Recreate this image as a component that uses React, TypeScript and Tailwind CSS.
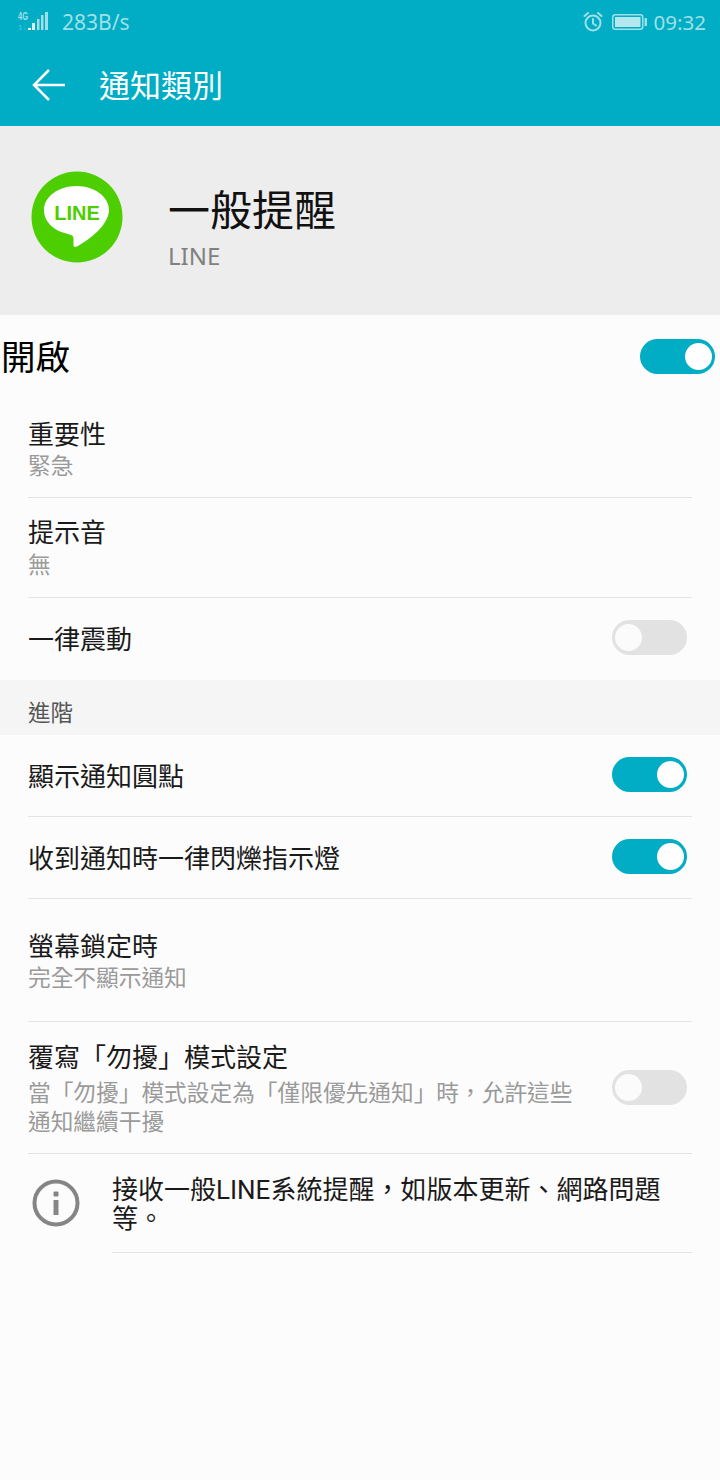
const cjk = "font-['Roboto','Noto_Sans_CJK_TC',sans-serif]";

const Toggle = ({ on }: { on?: boolean }) => (
  <div
    className={`flex items-center h-[35px] w-[75px] shrink-0 rounded-full px-[3px] ${
      on ? 'bg-[#00adc4] justify-end' : 'bg-[#e2e2e2] justify-start'
    }`}
  >
    <div className={`h-[27px] w-[27px] rounded-full ${on ? 'bg-white' : 'bg-[#fbfbfb]'}`} />
  </div>
);

const Row = ({
  title,
  sub,
  on,
  className,
  titleClass = '',
  subClass = 'mt-[1px]',
  border = true,
}: {
  title: string;
  sub?: string;
  on?: boolean;
  className: string;
  titleClass?: string;
  subClass?: string;
  border?: boolean;
}) => (
  <div className={`mx-[28px] flex items-center justify-between ${border ? 'border-b border-[#e3e3e3]' : ''} ${className}`}>
    <div className={`min-w-0 ${titleClass}`}>
      <div className="text-[26px] leading-[34px] text-[#1a1a1a]">{title}</div>
      {sub && <div className={`w-[550px] text-[22.7px] leading-[29px] text-[#9a9a9a] ${subClass}`}>{sub}</div>}
    </div>
    {on !== undefined && (
      <div className="mr-[5px]">
        <Toggle on={on} />
      </div>
    )}
  </div>
);

const LineLogo = () => (
  <svg width="92" height="92" viewBox="0 0 92 92">
    <circle cx="46" cy="46" r="45.5" fill="#4cce00" />
    <path
      d="M45.500 15C27 15 13 26 13 39c0 12 10 21 24 24 4 1 5.500 2 5.500 5v6c0 2 1.500 2.500 3.500 1.500C60 68 78 53 78 39 78 26 64 15 45.500 15Z"
      fill="#fff"
    />
    <text
      x="46"
      y="49"
      textAnchor="middle"
      fontFamily="'Liberation Sans',sans-serif"
      fontWeight="700"
      fontSize="20"
      fill="#4cce00"
    >
      LINE
    </text>
  </svg>
);

const StatusBar = () => (
  <div className="flex h-[44px] items-center justify-between pl-[17px] pr-[14px] text-[#9fe0e8]">
    <div className="flex items-center">
      <svg width="32" height="22" viewBox="0 0 32 22" fill="#9fe0e8">
        <text x="1" y="9" fontSize="10" fontWeight="700" textLength={10} lengthAdjust="spacingAndGlyphs" fontFamily="'Liberation Sans',sans-serif">4G</text>
        <text x="1" y="19" fontSize="8" opacity="0.5" fontFamily="'Liberation Sans',sans-serif">1↓</text>
        <rect x="11" y="17" width="3" height="2" fill="#fff" />
        <rect x="15" y="12" width="3" height="7" fill="#d5f3f6" />
        <rect x="20" y="8" width="2.500" height="11" />
        <rect x="24" y="4" width="2.500" height="15" />
        <rect x="28" y="1" width="3" height="18" />
      </svg>
      <span className="ml-[13px] text-[21px] leading-none font-['Noto_Sans',sans-serif]">283B/s</span>
    </div>
    <div className="flex items-center">
      <svg width="20" height="20" viewBox="1 1 20 20" fill="none" stroke="#9fe0e8" strokeWidth="2" strokeLinecap="round">
        <circle cx="11" cy="12" r="7.500" />
        <path d="M11 8v4.500l3 2M2.500 5 6 2M19.500 5 16 2" />
      </svg>
      <svg className="ml-[9px]" width="35" height="16" viewBox="0 0 35 16">
        <rect x="0.750" y="0.750" width="30" height="14.500" rx="2.500" fill="none" stroke="#9fe0e8" strokeWidth="1.500" />
        <rect x="3" y="3" width="25.500" height="10" fill="#b5e8ee" />
        <rect x="32.500" y="4" width="2.500" height="8" rx="0.500" fill="#9fe0e8" />
      </svg>
      <span className="ml-[7px] text-[20.500px] leading-none font-['Noto_Sans',sans-serif]">09:32</span>
    </div>
  </div>
);

export default function App() {
  return (
    <div className={`flex h-[1480px] w-[720px] flex-col overflow-hidden bg-[#fcfcfc] ${cjk}`}>
      <div className="h-[126px] bg-[#00adc4]">
        <StatusBar />
        <div className="flex h-[82px] items-center pl-[32px]">
          <svg width="34" height="34" viewBox="0 0 34 34" fill="none" stroke="#fff" strokeWidth="2.500">
            <path d="M33 17H3M17 2 2 17l15 15" />
          </svg>
          <span className="ml-[33px] pt-[3px] text-[31px] leading-none text-white">通知類別</span>
        </div>
      </div>

      <div className="flex h-[189px] items-center bg-[#ededed] pl-[31px]">
        <div className="-mt-[7px]">
          <LineLogo />
        </div>
        <div className="ml-[45px] pt-[17px]">
          <div className="text-[42px] leading-[50px] text-[#111]">一般提醒</div>
          <div className="mt-[4px] text-[24px] leading-[30px] text-[#808080] font-['Noto_Sans',sans-serif]">LINE</div>
        </div>
      </div>

      <div className="flex h-[83px] items-center justify-between pl-[1px] pr-[5px]">
        <span className="pt-[4px] text-[34.500px] leading-none text-black">開啟</span>
        <Toggle on />
      </div>

      <Row title="重要性" sub="緊急" subClass="mt-0" className="h-[100px] pt-[4px]" />
      <Row title="提示音" sub="無" className="h-[100px]" />
      <Row title="一律震動" on={false} titleClass="pt-[5px]" className="h-[82px] pb-[3px]" border={false} />

      <div className="flex h-[55px] items-center bg-[#f5f5f5] pl-[28px] pt-[12px] text-[22.500px] text-[#555]">進階</div>

      <Row title="顯示通知圓點" on titleClass="pt-[4px]" className="h-[82px] pb-[2px]" />
      <Row title="收到通知時一律閃爍指示燈" on titleClass="pt-[5px]" className="h-[82px] pb-[2px]" />
      <Row title="螢幕鎖定時" sub="完全不顯示通知" subClass="mt-0" titleClass="pt-[3px]" className="h-[123px]" />
      <Row
        title="覆寫「勿擾」模式設定"
        sub="當「勿擾」模式設定為「僅限優先通知」時，允許這些通知繼續干擾"
        subClass="mt-[4px]"
        titleClass="pt-[3px]"
        on={false}
        className="h-[132px]"
      />

      <div className="flex">
        <div className="flex w-[112px] shrink-0 justify-center pt-[25px]">
          <svg width="48" height="48" viewBox="0 0 48 48" fill="none">
            <circle cx="24" cy="24" r="21.500" stroke="#858585" strokeWidth="4" />
            <rect x="21.500" y="21" width="5" height="15" fill="#858585" />
            <rect x="21.500" y="12.500" width="5" height="5" rx="1" fill="#858585" />
          </svg>
        </div>
        <div className="mr-[28px] h-[99px] flex-1 border-b border-[#e3e3e3] pt-[22px] text-[26px] leading-[29px] text-[#1a1a1a]">
          接收一般LINE系統提醒，如版本更新、網路問題等。
        </div>
      </div>
    </div>
  );
}
